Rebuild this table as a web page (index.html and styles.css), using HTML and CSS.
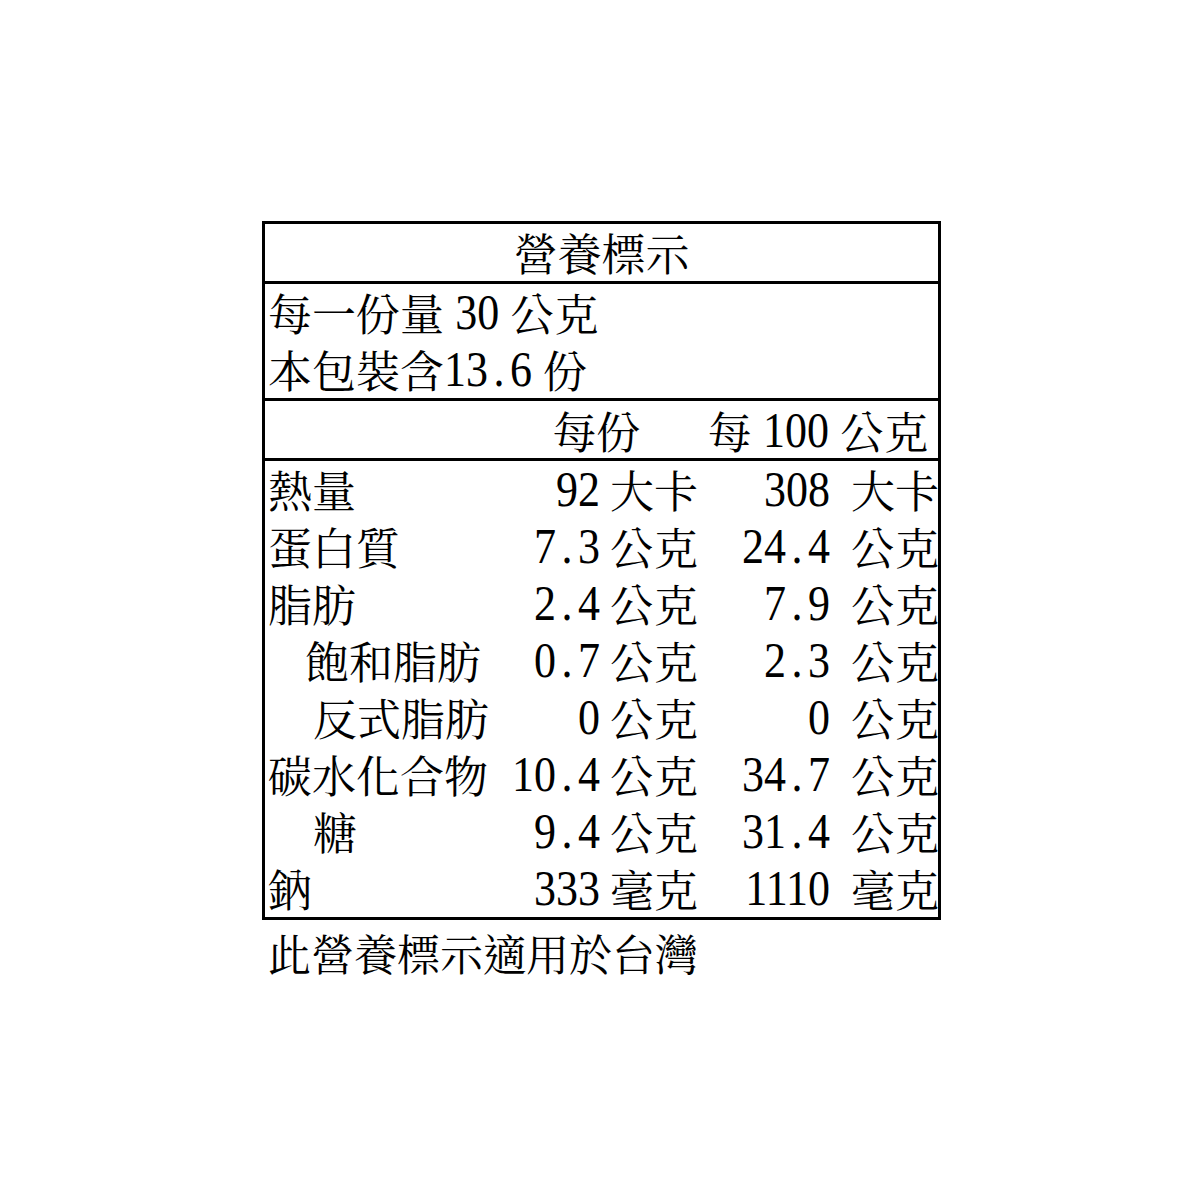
FILE: index.html
```html
<!DOCTYPE html>
<html lang="zh-Hant">
<head>
<meta charset="utf-8">
<title>營養標示</title>
<link rel="stylesheet" href="styles.css">
</head>
<body>
<div class="page">
  <div class="label">
    <div class="title">營養標示</div>
    <div class="serving">
      <div>每一份量 <span class="n">30</span> 公克</div>
      <div>本包裝含<span class="n">13<i>.</i>6</span> 份</div>
    </div>
    <div class="grid head">
      <div class="h1">每份</div>
      <div class="h2">每 <span class="n">100</span> 公克</div>
    </div>
    <div class="grid rows">
      <div class="lb">熱量</div><div class="v"><span class="n">92</span></div><div class="u">大卡</div><div class="v"><span class="n">308</span></div><div class="u u2">大卡</div>
      <div class="lb">蛋白質</div><div class="v"><span class="n">7<i>.</i>3</span></div><div class="u">公克</div><div class="v"><span class="n">24<i>.</i>4</span></div><div class="u u2">公克</div>
      <div class="lb">脂肪</div><div class="v"><span class="n">2<i>.</i>4</span></div><div class="u">公克</div><div class="v"><span class="n">7<i>.</i>9</span></div><div class="u u2">公克</div>
      <div class="lb in1">飽和脂肪</div><div class="v"><span class="n">0<i>.</i>7</span></div><div class="u">公克</div><div class="v"><span class="n">2<i>.</i>3</span></div><div class="u u2">公克</div>
      <div class="lb in2">反式脂肪</div><div class="v"><span class="n">0</span></div><div class="u">公克</div><div class="v"><span class="n">0</span></div><div class="u u2">公克</div>
      <div class="lb">碳水化合物</div><div class="v"><span class="n">10<i>.</i>4</span></div><div class="u">公克</div><div class="v"><span class="n">34<i>.</i>7</span></div><div class="u u2">公克</div>
      <div class="lb in2">糖</div><div class="v"><span class="n">9<i>.</i>4</span></div><div class="u">公克</div><div class="v"><span class="n">31<i>.</i>4</span></div><div class="u u2">公克</div>
      <div class="lb">鈉</div><div class="v"><span class="n">333</span></div><div class="u">毫克</div><div class="v"><span class="n">1110</span></div><div class="u u2">毫克</div>
    </div>
  </div>
  <div class="note">此營養標示適用於台灣</div>
</div>
</body>
</html>
```

FILE: styles.css
```css
html, body {
  margin: 0;
  padding: 0;
  background: #ffffff;
}

body {
  font-family: "Noto Serif CJK TC", "Noto Sans CJK TC", sans-serif;
  font-size: 44px;
  color: #000000;
}

.page {
  padding: 221px 0 0 262px;
}

.label {
  width: 673px;
  border: 3px solid #000000;
}

.title {
  height: 57px;
  line-height: 57px;
  text-align: center;
  white-space: nowrap;
}

.serving {
  border-top: 3px solid #000000;
  padding-left: 3px;
  height: 114px;
  line-height: 57px;
  white-space: nowrap;
}

.grid {
  display: grid;
  grid-template-columns: 238px 97px 98px 132px 1fr;
  border-top: 3px solid #000000;
  white-space: nowrap;
}

.head {
  height: 58px;
  line-height: 58px;
}

.h1 {
  grid-column: 2 / 4;
  text-align: center;
  padding-right: 8px;
}

.h2 {
  grid-column: 4 / 6;
  text-align: center;
}

.rows {
  line-height: 57px;
  margin-top: -1px;
}

.lb {
  padding-left: 3px;
}

.lb.in1 {
  padding-left: 40px;
}

.lb.in2 {
  padding-left: 48px;
}

.v {
  text-align: right;
}

.u {
  padding-left: 10px;
}

.u.u2 {
  padding-left: 21px;
}

.n {
  display: inline-block;
  font-family: "Liberation Serif", serif;
  font-size: 44px;
  line-height: 33px;
  transform: translateY(-4.3px) scaleY(1.16);
  transform-origin: 50% 16.5px;
}

.n i {
  font-style: normal;
  padding: 0 5.5px;
}

.note {
  padding-left: 6px;
  margin-top: 4px;
  font-size: 43px;
  line-height: 57px;
  white-space: nowrap;
}
```
